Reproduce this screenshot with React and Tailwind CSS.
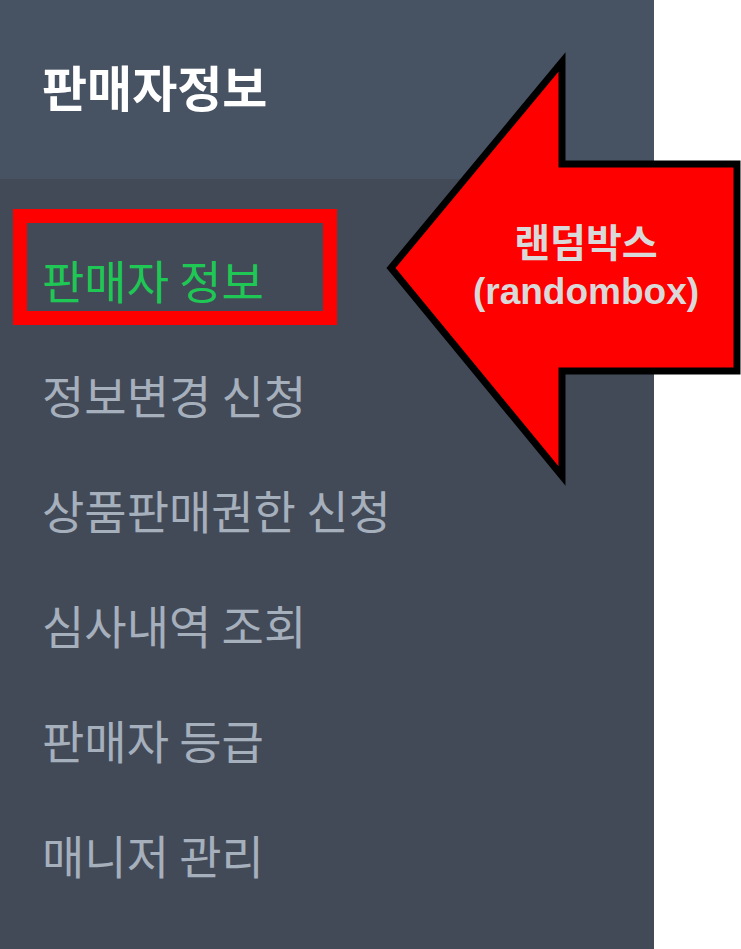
import React from "react";

const menus = [
  "판매자 정보",
  "정보변경 신청",
  "상품판매권한 신청",
  "심사내역 조회",
  "판매자 등급",
  "매니저 관리",
];

const SideMenu = () => {
  return (
    <div className="w-[654px] h-[949px] bg-[#424a58] flex flex-col shrink-0">
      <div className="h-[179px] bg-[#475263] flex items-center pl-[42px] pb-[8px]">
        <h1 className="text-[49px] font-bold text-white leading-none">
          판매자정보
        </h1>
      </div>
      <ul className="pt-[42px] flex flex-col">
        {menus.map((menu, index) => (
          <li
            key={index}
            className={`h-[115px] flex items-center pl-[42px] text-[46px] leading-none ${
              index === 0 ? "text-[#1fc754]" : "text-[#a6afbc]"
            }`}
          >
            {menu}
          </li>
        ))}
      </ul>
    </div>
  );
};

const Arrow = () => {
  return (
    <div className="absolute left-[380px] top-[50px] w-[361px] h-[440px]">
      <svg width="361" height="440" viewBox="380 50 361 440" className="absolute inset-0">
        <polygon
          points="391,268 562,62 562,164 737,164 737,371 562,371 562,476"
          fill="#ff0000"
          stroke="#000000"
          strokeWidth="7"
          strokeLinejoin="miter"
          strokeMiterlimit="10"
        />
      </svg>
      <div className="absolute left-[86px] top-[170px] w-[240px] flex flex-col items-center text-[#d9d9d9] font-bold leading-[48px] font-['Liberation_Sans','Noto_Sans_CJK_KR',sans-serif]">
        <span className="text-[39px]">랜덤박스</span>
        <span className="text-[37px]">(randombox)</span>
      </div>
    </div>
  );
};

export default function App() {
  return (
    <div className="relative w-[741px] h-[949px] flex bg-white overflow-hidden font-['Noto_Sans_CJK_KR','Noto_Sans',sans-serif]">
      <SideMenu />
      <div className="flex-1 bg-white" />
      {/* highlight box */}
      <div className="absolute left-[13px] top-[209px] w-[324px] h-[116px] border-[14px] border-[#ff0000]" />
      <Arrow />
    </div>
  );
}
